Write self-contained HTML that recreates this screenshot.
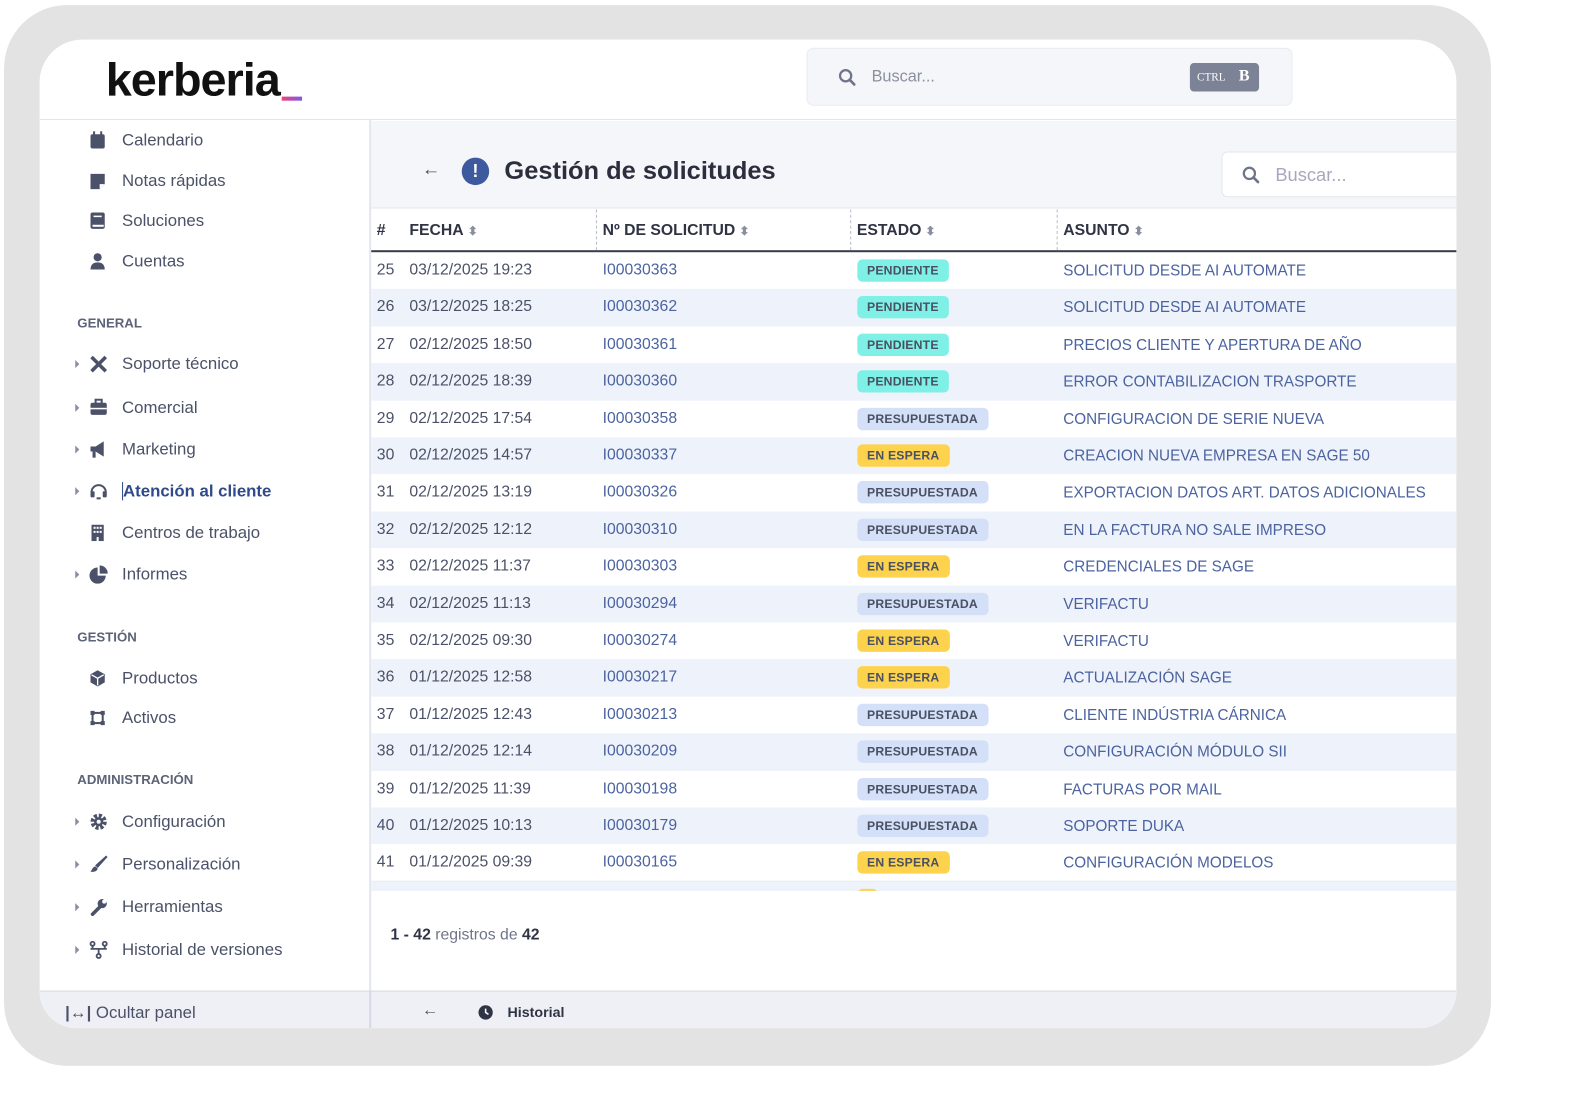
<!DOCTYPE html>
<html><head><meta charset="utf-8"><style>
*{margin:0;padding:0;box-sizing:border-box}
body{width:1593px;height:1080px;background:#fff;font-family:"Liberation Sans",sans-serif;position:relative;overflow:hidden}
.wrap{position:absolute;left:0;top:0;width:1593px;height:1080px;transform:scale(1.017);transform-origin:0 0}
.frame{position:absolute;left:4px;top:5px;width:1462px;height:1043px;background:#e3e3e3;border-radius:62px}
.screen{position:absolute;left:39px;top:39px;width:1393px;height:972px;background:#fff;border-radius:42px 42px 36px 36px;overflow:hidden}
.abs{position:absolute}
.side{color:#4b5168;font-size:16.5px}
.si{position:absolute;left:81px;height:20px;line-height:20px}
.si svg{position:absolute;left:-32px;top:1px}
.car{position:absolute;left:-46px;top:6px;width:0;height:0;border-left:4px solid #8a8fa0;border-top:4px solid transparent;border-bottom:4px solid transparent}
.sec{position:absolute;left:37px;font-size:13px;font-weight:bold;color:#5d6378}
.row{position:absolute;left:325px;width:1068px;height:36.4px;font-size:15.5px;color:#4b5168}
.row.alt{background:#eef2fa}
.row span{position:absolute;top:9px}
.row .id{color:#4b63a0}
.row .as{color:#4b63a0;font-size:15px;top:10px;left:681px}
.b{position:absolute;left:478px;top:7px;height:22px;line-height:22px;padding:0 10px;border-radius:5px;font-size:12px;font-weight:bold;color:#4a5062;letter-spacing:.2px}
.p{background:#7ef0e6}.q{background:#d3e0f8}.e{background:#fdd34e}
.hd{position:absolute;top:19px;font-size:15.5px;font-weight:bold;color:#2f3344}
.srt{font-size:12px;color:#8a8fa0;margin-left:4px}
.dv{position:absolute;top:0;height:40px;border-left:1.5px dashed #b8bcc8}
</style></head><body>
<div class="wrap">
<div class="frame"></div>
<div class="screen">
  <div class="abs" style="left:0;top:0;width:1393px;height:79px;border-bottom:1.5px solid #e3e6ee;background:#fff"></div>
  <div class="abs" style="left:65px;top:12px;font-size:46px;font-weight:bold;color:#111;letter-spacing:-1px">kerberia</div>
  <div class="abs" style="left:238px;top:56px;width:20px;height:4px;background:linear-gradient(90deg,#f0407a,#7a5cf0)"></div>
  <div class="abs" style="left:754px;top:8px;width:478px;height:57px;background:#f5f6f9;border:1px solid #e9ebf0;border-radius:7px"></div>
  <svg class="abs" style="left:785px;top:28px" width="18" height="18" viewBox="0 0 18 18"><circle cx="7.5" cy="7.5" r="5.5" fill="none" stroke="#6f7588" stroke-width="2.2"/><path d="M11.5 11.5L16 16" stroke="#6f7588" stroke-width="2.6" stroke-linecap="round"/></svg>
  <div class="abs" style="left:818px;top:28px;font-size:16px;color:#8b90a0">Buscar...</div>
  <div class="abs" style="left:1131px;top:23px;width:68px;height:28px;background:#7c8397;border-radius:4px;color:#fff;font-family:'Liberation Serif',serif"><span style="position:absolute;left:7px;top:8px;font-size:11px">CTRL</span><span style="position:absolute;left:48px;top:4px;font-size:16px;font-weight:bold">B</span></div>

  <div class="abs" style="left:324px;top:79px;width:1.5px;height:893px;background:#e3e6ee"></div>
  <div class="side">
    <div class="si" style="top:89px"><svg width="16" height="18" viewBox="0 0 16 18"><rect x="1" y="3" width="14" height="14" rx="2" fill="#4b5168"/><rect x="3.5" y="0" width="2" height="4" fill="#4b5168"/><rect x="10.5" y="0" width="2" height="4" fill="#4b5168"/></svg>Calendario</div>
    <div class="si" style="top:129px"><svg width="16" height="18" viewBox="0 0 16 18"><path d="M1 2h14v10l-5 5H1z" fill="#4b5168"/><path d="M10 17v-5h5" fill="#fff"/></svg>Notas rápidas</div>
    <div class="si" style="top:168px"><svg width="16" height="18" viewBox="0 0 16 18"><rect x="1" y="1" width="14" height="16" rx="2" fill="#4b5168"/><rect x="3" y="13" width="11" height="2" fill="#fff"/><rect x="4" y="4" width="8" height="1.5" fill="#fff"/></svg>Soluciones</div>
    <div class="si" style="top:208px"><svg width="16" height="18" viewBox="0 0 16 18"><circle cx="8" cy="5" r="4" fill="#4b5168"/><path d="M1 17c0-5 3-7 7-7s7 2 7 7z" fill="#4b5168"/></svg>Cuentas</div>
    <div class="sec" style="top:271px">GENERAL</div>
    <div class="si" style="top:309px"><span class="car"></span><svg width="18" height="18" viewBox="0 0 18 18"><path d="M2 2l14 14M16 2L2 16" stroke="#4b5168" stroke-width="3.5"/></svg>Soporte técnico</div>
    <div class="si" style="top:352px"><span class="car"></span><svg width="18" height="18" viewBox="0 0 18 18"><rect x="1" y="4" width="16" height="12" rx="2" fill="#4b5168"/><rect x="6" y="1" width="6" height="4" fill="none" stroke="#4b5168" stroke-width="2"/><rect x="1" y="9" width="16" height="1.5" fill="#fff"/></svg>Comercial</div>
    <div class="si" style="top:393px"><span class="car"></span><svg width="18" height="18" viewBox="0 0 18 18"><path d="M1 6h5l8-5v15l-8-5H1z" fill="#4b5168"/><rect x="3" y="11" width="3" height="6" fill="#4b5168"/></svg>Marketing</div>
    <div class="si" style="top:434px;color:#2f4a8a;font-weight:bold"><span class="car"></span><svg width="18" height="18" viewBox="0 0 18 18"><path d="M2 10a7 7 0 0114 0" fill="none" stroke="#4b5168" stroke-width="2"/><rect x="1" y="9" width="4" height="6" rx="1" fill="#4b5168"/><rect x="13" y="9" width="4" height="6" rx="1" fill="#4b5168"/><rect x="7" y="15" width="4" height="2" fill="#4b5168"/></svg><span style="border-left:1.5px solid #2f4a8a">Atención al cliente</span></div>
    <div class="si" style="top:475px"><svg width="16" height="18" viewBox="0 0 16 18"><rect x="2" y="1" width="12" height="16" fill="#4b5168"/><g fill="#fff"><rect x="4" y="3" width="2" height="2"/><rect x="7" y="3" width="2" height="2"/><rect x="10" y="3" width="2" height="2"/><rect x="4" y="7" width="2" height="2"/><rect x="7" y="7" width="2" height="2"/><rect x="10" y="7" width="2" height="2"/><rect x="7" y="13" width="2" height="4"/></g></svg>Centros de trabajo</div>
    <div class="si" style="top:516px"><span class="car"></span><svg width="18" height="18" viewBox="0 0 18 18"><path d="M8 2a8 8 0 108 8H8z" fill="#4b5168"/><path d="M10 0a8 8 0 018 8h-8z" fill="#4b5168"/></svg>Informes</div>
    <div class="sec" style="top:580px">GESTIÓN</div>
    <div class="si" style="top:618px"><svg width="16" height="18" viewBox="0 0 16 18"><path d="M8 1l7 4v8l-7 4-7-4V5z" fill="#4b5168"/><path d="M8 9l6-3.5M8 9L2 5.5M8 9v7" stroke="#fff" stroke-width="1.3"/></svg>Productos</div>
    <div class="si" style="top:657px"><svg width="16" height="18" viewBox="0 0 16 18"><rect x="3" y="4" width="10" height="10" fill="none" stroke="#4b5168" stroke-width="2"/><g fill="#4b5168"><rect x="1" y="2" width="4" height="4"/><rect x="11" y="2" width="4" height="4"/><rect x="1" y="12" width="4" height="4"/><rect x="11" y="12" width="4" height="4"/></g></svg>Activos</div>
    <div class="sec" style="top:720px">ADMINISTRACIÓN</div>
    <div class="si" style="top:759px"><span class="car"></span><svg width="18" height="18" viewBox="0 0 18 18"><circle cx="9" cy="9" r="6" fill="none" stroke="#4b5168" stroke-width="4" stroke-dasharray="3 1.7"/><circle cx="9" cy="9" r="4.5" fill="#4b5168"/><circle cx="9" cy="9" r="2" fill="#fff"/></svg>Configuración</div>
    <div class="si" style="top:801px"><span class="car"></span><svg width="18" height="18" viewBox="0 0 18 18"><path d="M17 1L8 11l-1-1z" fill="#4b5168" stroke="#4b5168" stroke-width="2"/><path d="M6 11c-3 0-3 3-5 5 4 1 7-1 7-3z" fill="#4b5168"/></svg>Personalización</div>
    <div class="si" style="top:843px"><span class="car"></span><svg width="18" height="18" viewBox="0 0 18 18"><path d="M3 16l8-8" stroke="#4b5168" stroke-width="3.5" stroke-linecap="round"/><circle cx="12.5" cy="5.5" r="4.5" fill="#4b5168"/><circle cx="14.5" cy="3.5" r="2" fill="#fff"/></svg>Herramientas</div>
    <div class="si" style="top:885px"><span class="car"></span><svg width="18" height="18" viewBox="0 0 18 18"><g fill="none" stroke="#4b5168" stroke-width="1.8"><circle cx="3" cy="3" r="2"/><circle cx="15" cy="3" r="2"/><circle cx="9" cy="15" r="2"/><path d="M3 5v3h12V5M9 8v5M1 8h16"/></g></svg>Historial de versiones</div>
  </div>

  <div class="abs" style="left:325.5px;top:80px;width:1068px;height:86px;background:#f5f6f9;border-bottom:1px solid #e3e6ee"></div>
  <div class="abs" style="left:376px;top:117px;font-size:18px;color:#4b5168">←</div>
  <div class="abs" style="left:415px;top:116px;width:27px;height:27px;border-radius:50%;background:#3d5a9e;color:#fff;font-weight:bold;font-size:18px;text-align:center;line-height:27px">!</div>
  <div class="abs" style="left:457px;top:115px;font-size:25px;font-weight:bold;color:#2b2f3d">Gestión de solicitudes</div>
  <div class="abs" style="left:1162px;top:110px;width:260px;height:45px;background:#fff;border:1px solid #e3e6ee;border-radius:6px"></div>
  <svg class="abs" style="left:1182px;top:124px" width="18" height="18" viewBox="0 0 18 18"><circle cx="7.5" cy="7.5" r="5.5" fill="none" stroke="#6f7588" stroke-width="2.2"/><path d="M11.5 11.5L16 16" stroke="#6f7588" stroke-width="2.6" stroke-linecap="round"/></svg>
  <div class="abs" style="left:1215px;top:123px;font-size:18px;color:#a7a9ba">Buscar...</div>

  <div class="abs" style="left:325.5px;top:167px;width:1068px;height:42px;background:#fff;border-bottom:2px solid #3a3e4c">
    <span class="hd" style="left:6px;top:12px">#</span>
    <span class="hd" style="left:38px;top:12px">FECHA<span class="srt">⬍</span></span>
    <div class="dv" style="left:221px"></div>
    <span class="hd" style="left:228px;top:12px">Nº DE SOLICITUD<span class="srt">⬍</span></span>
    <div class="dv" style="left:471px"></div>
    <span class="hd" style="left:478px;top:12px">ESTADO<span class="srt">⬍</span></span>
    <div class="dv" style="left:674px"></div>
    <span class="hd" style="left:681px;top:12px">ASUNTO<span class="srt">⬍</span></span>
  </div>

  <div class="abs" style="left:325.5px;top:209px;width:1068px;height:628px;overflow:hidden">
  <div style="position:relative;left:-325px">
<div class="row" style="top:0px"><span style="left:6px">25</span><span style="left:38px">03/12/2025 19:23</span><span class="id" style="left:228px">I00030363</span><div class="b p">PENDIENTE</div><span class="as">SOLICITUD DESDE AI AUTOMATE</span></div>
<div class="row alt" style="top:36.4px"><span style="left:6px">26</span><span style="left:38px">03/12/2025 18:25</span><span class="id" style="left:228px">I00030362</span><div class="b p">PENDIENTE</div><span class="as">SOLICITUD DESDE AI AUTOMATE</span></div>
<div class="row" style="top:72.8px"><span style="left:6px">27</span><span style="left:38px">02/12/2025 18:50</span><span class="id" style="left:228px">I00030361</span><div class="b p">PENDIENTE</div><span class="as">PRECIOS CLIENTE Y APERTURA DE AÑO</span></div>
<div class="row alt" style="top:109.2px"><span style="left:6px">28</span><span style="left:38px">02/12/2025 18:39</span><span class="id" style="left:228px">I00030360</span><div class="b p">PENDIENTE</div><span class="as">ERROR CONTABILIZACION TRASPORTE</span></div>
<div class="row" style="top:145.6px"><span style="left:6px">29</span><span style="left:38px">02/12/2025 17:54</span><span class="id" style="left:228px">I00030358</span><div class="b q">PRESUPUESTADA</div><span class="as">CONFIGURACION DE SERIE NUEVA</span></div>
<div class="row alt" style="top:182px"><span style="left:6px">30</span><span style="left:38px">02/12/2025 14:57</span><span class="id" style="left:228px">I00030337</span><div class="b e">EN ESPERA</div><span class="as">CREACION NUEVA EMPRESA EN SAGE 50</span></div>
<div class="row" style="top:218.4px"><span style="left:6px">31</span><span style="left:38px">02/12/2025 13:19</span><span class="id" style="left:228px">I00030326</span><div class="b q">PRESUPUESTADA</div><span class="as">EXPORTACION DATOS ART. DATOS ADICIONALES</span></div>
<div class="row alt" style="top:254.8px"><span style="left:6px">32</span><span style="left:38px">02/12/2025 12:12</span><span class="id" style="left:228px">I00030310</span><div class="b q">PRESUPUESTADA</div><span class="as">EN LA FACTURA NO SALE IMPRESO</span></div>
<div class="row" style="top:291.2px"><span style="left:6px">33</span><span style="left:38px">02/12/2025 11:37</span><span class="id" style="left:228px">I00030303</span><div class="b e">EN ESPERA</div><span class="as">CREDENCIALES DE SAGE</span></div>
<div class="row alt" style="top:327.6px"><span style="left:6px">34</span><span style="left:38px">02/12/2025 11:13</span><span class="id" style="left:228px">I00030294</span><div class="b q">PRESUPUESTADA</div><span class="as">VERIFACTU</span></div>
<div class="row" style="top:364px"><span style="left:6px">35</span><span style="left:38px">02/12/2025 09:30</span><span class="id" style="left:228px">I00030274</span><div class="b e">EN ESPERA</div><span class="as">VERIFACTU</span></div>
<div class="row alt" style="top:400.4px"><span style="left:6px">36</span><span style="left:38px">01/12/2025 12:58</span><span class="id" style="left:228px">I00030217</span><div class="b e">EN ESPERA</div><span class="as">ACTUALIZACIÓN SAGE</span></div>
<div class="row" style="top:436.8px"><span style="left:6px">37</span><span style="left:38px">01/12/2025 12:43</span><span class="id" style="left:228px">I00030213</span><div class="b q">PRESUPUESTADA</div><span class="as">CLIENTE INDÚSTRIA CÁRNICA</span></div>
<div class="row alt" style="top:473.2px"><span style="left:6px">38</span><span style="left:38px">01/12/2025 12:14</span><span class="id" style="left:228px">I00030209</span><div class="b q">PRESUPUESTADA</div><span class="as">CONFIGURACIÓN MÓDULO SII</span></div>
<div class="row" style="top:509.6px"><span style="left:6px">39</span><span style="left:38px">01/12/2025 11:39</span><span class="id" style="left:228px">I00030198</span><div class="b q">PRESUPUESTADA</div><span class="as">FACTURAS POR MAIL</span></div>
<div class="row alt" style="top:546px"><span style="left:6px">40</span><span style="left:38px">01/12/2025 10:13</span><span class="id" style="left:228px">I00030179</span><div class="b q">PRESUPUESTADA</div><span class="as">SOPORTE DUKA</span></div>
<div class="row" style="top:582.4px;border-bottom:1px solid #e6e9f0"><span style="left:6px">41</span><span style="left:38px">01/12/2025 09:39</span><span class="id" style="left:228px">I00030165</span><div class="b e">EN ESPERA</div><span class="as">CONFIGURACIÓN MODELOS</span></div>
<div class="row alt" style="top:618.8px"><div class="b e"></div></div>
  </div></div>

  <div class="abs" style="left:345px;top:872px;font-size:15.5px;color:#6f7588"><b style="color:#2f3344">1 - 42</b> registros de <b style="color:#2f3344">42</b></div>

  <div class="abs" style="left:0;top:935px;width:1393px;height:37px;background:#eef0f5;border-top:1.5px solid #d5d9e4"></div>
  <div class="abs" style="left:324px;top:935px;width:1.5px;height:37px;background:#d5d9e4"></div>
  <div class="abs" style="left:25px;top:948px;font-size:16.5px;color:#4b5168"><b>|↔|</b> Ocultar panel</div>
  <div class="abs" style="left:376px;top:946px;font-size:16px;color:#4b5168">←</div>
  <svg class="abs" style="left:431px;top:949px" width="15" height="15" viewBox="0 0 16 16"><circle cx="8" cy="8" r="7.5" fill="#2f3344"/><path d="M8 4v4l3 2" stroke="#fff" stroke-width="1.6" fill="none"/></svg>
  <div class="abs" style="left:460px;top:948px;font-size:14px;font-weight:bold;color:#2f3344">Historial</div>
</div>
</div>
</body></html>
